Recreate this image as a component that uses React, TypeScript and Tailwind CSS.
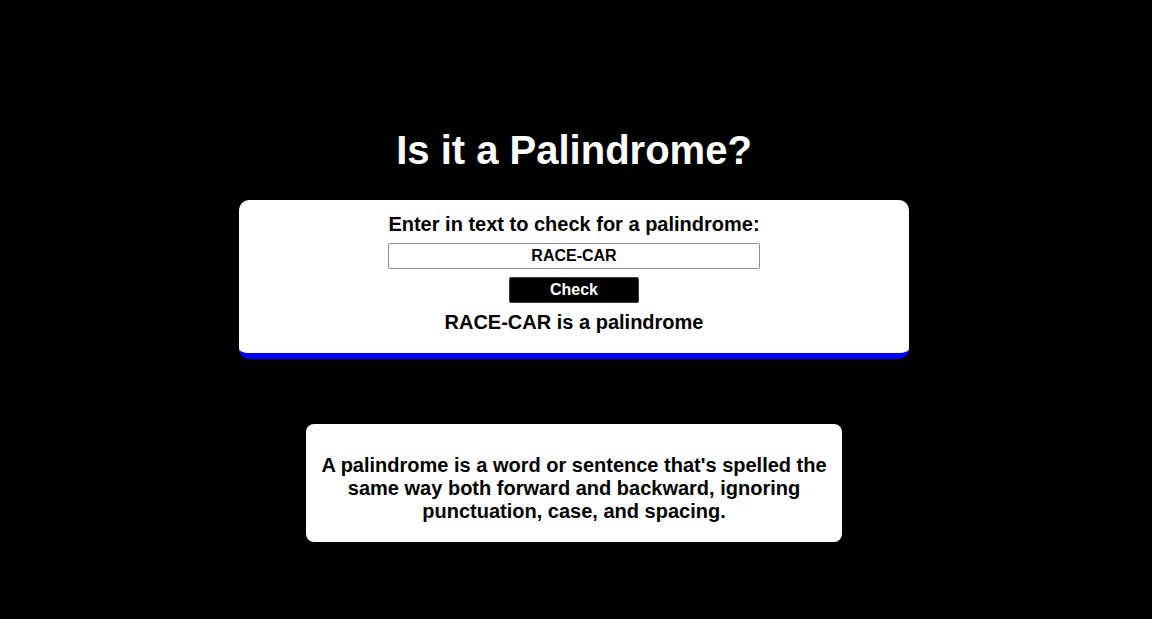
import { useState } from 'react';

// ── Helpers ──────────────────────────────────────────────────────────────────
function isPalindrome(text: string) {
  const clean = text.toLowerCase().replace(/[^a-z0-9]/g, '');
  return clean.length > 0 && clean === clean.split('').reverse().join('');
}

// ── Checker card ─────────────────────────────────────────────────────────────
function CheckerCard() {
  const [value, setValue] = useState('RACE-CAR');
  const [checked, setChecked] = useState('RACE-CAR');

  return (
    <div className="w-[670px] rounded-[10px] border-b-[6px] border-[#0000ff] bg-white pt-[13px] pb-[19px] flex flex-col items-center text-black">
      <label htmlFor="text-input" className="text-[20px] leading-[23px] font-bold">
        Enter in text to check for a palindrome:
      </label>
      <input
        id="text-input"
        value={value}
        onChange={(e) => setValue(e.target.value)}
        className="mt-[7px] w-[372px] h-[26px] border border-[#8f8f8f] rounded-[2px] text-center text-[16px] font-bold text-black outline-none"
      />
      <button
        onClick={() => setChecked(value)}
        className="mt-[8px] w-[130px] h-[26px] bg-black text-white text-[16px] font-bold rounded-[2px] border border-[#3a3a3a]"
      >
        Check
      </button>
      <p className="mt-[8px] text-[20px] leading-[23px] font-bold">
        {checked} {isPalindrome(checked) ? 'is' : 'is not'} a palindrome
      </p>
    </div>
  );
}

// ── Page ──────────────────────────────────────────────────────────────────────
export default function App() {
  return (
    <main
      className="min-h-screen bg-black flex flex-col items-center pt-[127px] pr-[4px]"
      style={{ fontFamily: '"Liberation Sans", Arial, sans-serif' }}
    >
      <h1 className="text-[40px] leading-[46px] font-bold text-white">Is it a Palindrome?</h1>

      <div className="mt-[27px]">
        <CheckerCard />
      </div>

      <div className="mt-[65px] w-[536px] rounded-[8px] bg-white px-[14px] pt-[30px] pb-[19px]">
        <p className="text-center text-[20px] leading-[23px] font-bold text-black">
          A palindrome is a word or sentence that's spelled the same way both forward and backward,
          ignoring punctuation, case, and spacing.
        </p>
      </div>
    </main>
  );
}
